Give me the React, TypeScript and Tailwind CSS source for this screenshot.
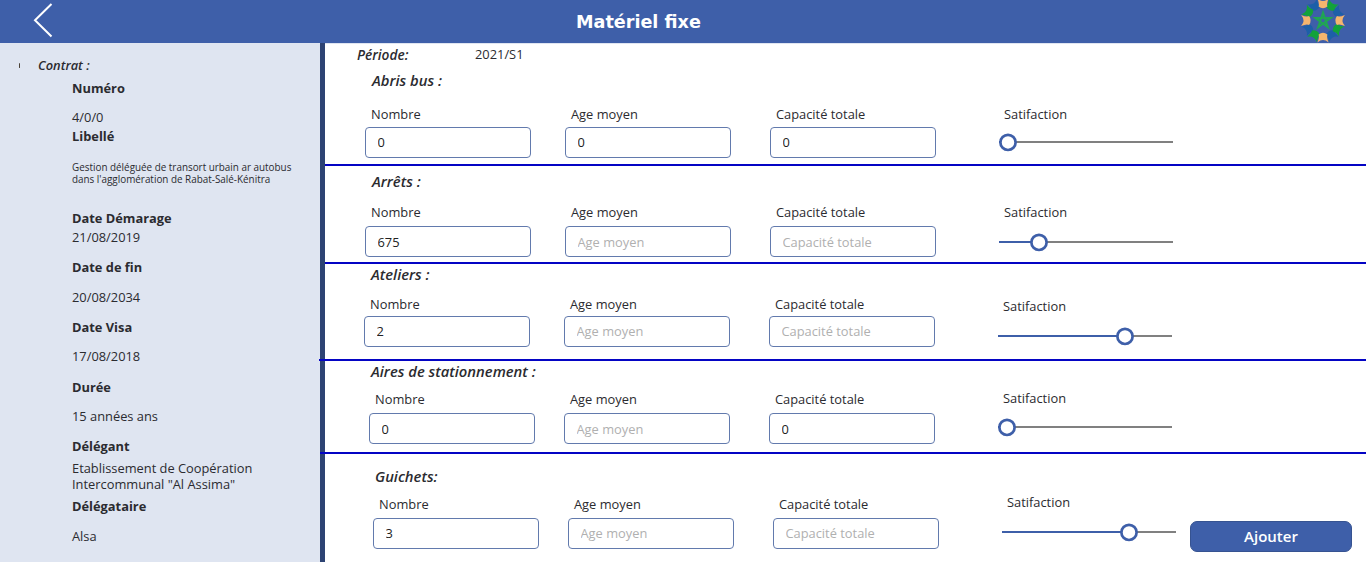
import React from "react";

type Field = { label: string; value: string; col: string };
type SectionData = {
  title: string;
  titleClass: string;
  rowClass: string;
  height: string;
  gap: string;
  pad: string;
  fields: Field[];
  sliderCol: string;
  sliderLabel: string;
  sliderGap: string;
  position: number;
  rule?: string;
};

const sections: SectionData[] = [
  {
    title: "Abris bus :", titleClass: "ml-[47px]", rowClass: "mt-[14px]", height: "h-[94px]", gap: "mt-[3px]", pad: "pb-px",
    fields: [
      { label: "Nombre", value: "0", col: "ml-[40px]" },
      { label: "Age moyen", value: "0", col: "ml-[34px]" },
      { label: "Capacité totale", value: "0", col: "ml-[39px]" },
    ],
    sliderCol: "ml-[63px]", sliderLabel: "", sliderGap: "mt-[9px]", position: 0, rule: "",
  },
  {
    title: "Arrêts :", titleClass: "ml-[47px] mt-[5px]", rowClass: "mt-[11px]", height: "h-[96px]", gap: "mt-[4px]", pad: "pt-px",
    fields: [
      { label: "Nombre", value: "675", col: "ml-[40px]" },
      { label: "Age moyen", value: "", col: "ml-[34px]" },
      { label: "Capacité totale", value: "", col: "ml-[39px]" },
    ],
    sliderCol: "ml-[63px]", sliderLabel: "", sliderGap: "mt-[11px]", position: 31, rule: "",
  },
  {
    title: "Ateliers :", titleClass: "ml-[46px]", rowClass: "mt-[10px]", height: "h-[95px]", gap: "mt-[2px]", pad: "pb-px",
    fields: [
      { label: "Nombre", value: "2", col: "ml-[39px]" },
      { label: "Age moyen", value: "", col: "ml-[34px]" },
      { label: "Capacité totale", value: "", col: "ml-[39px]" },
    ],
    sliderCol: "ml-[63px]", sliderLabel: "mt-[2px]", sliderGap: "mt-[11px]", position: 118, rule: "relative -ml-[6px]",
  },
  {
    title: "Aires de stationnement :", titleClass: "ml-[46px]", rowClass: "mt-[8px]", height: "h-[91px]", gap: "mt-[4px]", pad: "pt-px",
    fields: [
      { label: "Nombre", value: "0", col: "ml-[44px]" },
      { label: "Age moyen", value: "", col: "ml-[29px]" },
      { label: "Capacité totale", value: "0", col: "ml-[39px]" },
    ],
    sliderCol: "ml-[63px]", sliderLabel: "-mt-px", sliderGap: "mt-[10px]", position: 0, rule: "relative -ml-[5px]",
  },
  {
    title: "Guichets:", titleClass: "ml-[50px] mt-[12px]", rowClass: "mt-[8px]", height: "h-[108px]", gap: "mt-[4px]", pad: "pb-px",
    fields: [
      { label: "Nombre", value: "3", col: "ml-[48px]" },
      { label: "Age moyen", value: "", col: "ml-[29px]" },
      { label: "Capacité totale", value: "", col: "ml-[39px]" },
    ],
    sliderCol: "ml-[63px]", sliderLabel: "-mt-[2px]", sliderGap: "mt-[11px]", position: 118,
  },
];

function Slider({ position }: { position: number }) {
  return (
    <svg className="block h-[19px] w-[174px]" viewBox="0 0 174 19">
      <rect x="0" y="8" width="174" height="2" fill="#808080" />
      <rect x="0" y="8" width={position + 9} height="2" fill="#3e5fa9" />
      <circle cx={position + 9} cy="9.4" r="7.6" fill="#fff" stroke="#3e5fa9" strokeWidth="2.7" />
    </svg>
  );
}

function Section({ data }: { data: SectionData }) {
  const last = data.rule === undefined;
  return (
    <>
      <section className={`flex flex-none flex-col ${data.height}`}>
        <h2 className={`h-[20px] flex-none whitespace-nowrap text-[14.8px] leading-[20px] font-semibold italic ${data.titleClass}`}>
          {data.title}
        </h2>
        <div className={`flex items-start ${data.rowClass}`}>
          {data.fields.map((f) => (
            <label key={f.label} className={`block w-[166px] flex-none ${f.col}`}>
              <span className="block h-[20px] pl-[6px] leading-[20px]">{f.label}</span>
              <input
                className={`block h-[31px] w-full rounded-[4px] border border-[#627aad] bg-white pr-[12px] pl-[11.5px] text-[12.85px] text-[#222] outline-none placeholder:text-[#b0b0b0] ${data.gap} ${data.pad}`}
                defaultValue={f.value}
                placeholder={f.label}
              />
            </label>
          ))}
          <div className={`flex-none ${data.sliderCol}`}>
            <div className={`h-[20px] pl-[5px] leading-[20px] ${data.sliderLabel}`}>Satifaction</div>
            <div className={data.sliderGap}>
              <Slider position={data.position} />
            </div>
          </div>
          {last && (
            <button className="mt-[27px] ml-[14px] h-[31px] w-[162px] flex-none rounded-[7px] border border-[#365391] bg-[#3e5fa9] text-[15px] leading-[29px] font-semibold text-white">
              Ajouter
            </button>
          )}
        </div>
      </section>
      {!last && <div className={`h-[2px] flex-none bg-[#0404c4] ${data.rule}`} />}
    </>
  );
}

const details = [
  { text: "Numéro", cls: "mt-[3px] leading-[20px] font-bold" },
  { text: "4/0/0", cls: "mt-[9px] leading-[20px]" },
  { text: "Libellé", cls: "-mt-px leading-[20px] font-bold" },
  { text: "Gestion déléguée de transort urbain ar autobus dans l'agglomération de Rabat-Salé-Kénitra", cls: "mt-[15px] w-[235px] text-[9.88px] leading-[12px]" },
  { text: "Date Démarage", cls: "mt-[23px] leading-[20px] font-bold" },
  { text: "21/08/2019", cls: "-mt-px leading-[20px]" },
  { text: "Date de fin", cls: "mt-[10px] leading-[20px] font-bold" },
  { text: "20/08/2034", cls: "mt-[10px] leading-[20px]" },
  { text: "Date Visa", cls: "mt-[10px] leading-[20px] font-bold" },
  { text: "17/08/2018", cls: "mt-[9px] leading-[20px]" },
  { text: "Durée", cls: "mt-[11px] leading-[20px] font-bold" },
  { text: "15 années ans", cls: "mt-[9px] leading-[20px]" },
  { text: "Délégant", cls: "mt-[10px] leading-[20px] font-bold" },
  { text: 'Etablissement de Coopération Intercommunal "Al Assima"', cls: "mt-[4px] w-[200px] leading-[16px]" },
  { text: "Délégataire", cls: "mt-[4px] leading-[20px] font-bold" },
  { text: "Alsa", cls: "mt-[10px] leading-[20px]" },
];

const petalRings = [
  { color: "#1d5fa8", angles: [60, 150, 240, 330] },
  { color: "#12a23a", angles: [30, 120, 210, 300] },
  { color: "#f5b56e", angles: [0, 90, 180, 270] },
];

function Logo() {
  return (
    <svg className="block h-[43px] w-[46px]" viewBox="0 0 46 43">
      {petalRings.map((ring) =>
        ring.angles.map((angle) => (
          <path
            key={angle}
            d="M17.4-1.4Q23 3.4 28.6-1.4Q26.4 3.5 27.4 6.6Q23 9.8 18.6 6.6Q19.6 3.5 17.4-1.4Z"
            fill={ring.color}
            transform={`rotate(${angle} 23 20.5)`}
          />
        )),
      )}
      <path d="M23 12.6L27.9 27.3L15.4 18L30.6 18L18.1 27.3Z" fill="none" stroke="#20a653" strokeWidth="2" />
    </svg>
  );
}

export default function App() {
  return (
    <div className="flex h-[562px] w-[1366px] flex-col overflow-hidden bg-white font-['Open_Sans','Noto_Sans',sans-serif] text-[12.85px] text-[#2b2b30]">
      <header className="flex h-[43px] flex-none items-start bg-[#3e5fa9]">
        <button aria-label="Retour" className="ml-[33px] w-[21px]">
          <svg className="block h-[40px] w-[21px]" viewBox="0 0 21 40">
            <path d="M18.5 4L2 20.3L18.5 36.5" fill="none" stroke="#fff" strokeWidth="2" />
          </svg>
        </button>
        <h1 className="ml-[522px] w-[126px] whitespace-nowrap pt-px font-['DejaVu_Sans',sans-serif] text-[17.6px] leading-[42px] font-bold text-white">Matériel fixe</h1>
        <div className="ml-auto pr-[20px]">
          <Logo />
        </div>
      </header>
      <div className="flex h-[519px] flex-none">
        <aside className="w-[325px] flex-none border-r-[5px] border-[#2d4373] bg-[#dfe5f1]">
          <div className="flex h-[32px] items-start pt-[12px] leading-[20px]">
            <span className="mt-[8px] ml-[19px] h-[5px] w-px rounded-full bg-[#4b4238]" />
            <span className="ml-[18px] font-semibold italic">Contrat :</span>
          </div>
          <div className="pl-[72px]">
            {details.map((d) => (
              <p key={d.text} className={d.cls}>{d.text}</p>
            ))}
          </div>
        </aside>
        <main className="flex w-[1041px] flex-none flex-col">
          <div className="flex h-[27px] flex-none border-t border-[#dfe5f1] leading-[20px]">
            <span className="ml-[32px] w-[118px] pt-px text-[13.7px] font-semibold italic">Période:</span>
            <span>2021/S1</span>
          </div>
          {sections.map((s) => (
            <Section key={s.title} data={s} />
          ))}
        </main>
      </div>
    </div>
  );
}
